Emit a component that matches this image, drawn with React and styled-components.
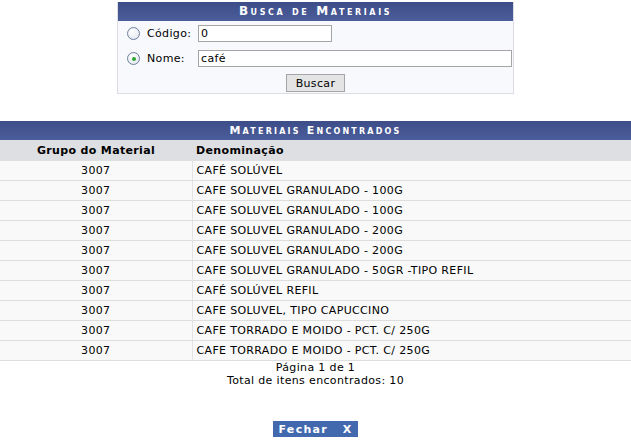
import React from "react";
import styled, { createGlobalStyle } from "styled-components";

const GlobalStyle = createGlobalStyle`
  body {
    margin: 0;
    background: #ffffff;
    font-family: "DejaVu Sans", Verdana, sans-serif;
    font-size: 11px;
    letter-spacing: 0.35px;
    color: #000;
  }
`;

const Page = styled.div`
  width: 631px;
  padding-top: 2px;
`;

const SearchBox = styled.form`
  width: 395px;
  margin: 0 auto;
  border: 1px solid #dcdde2;
  border-top: none;
  background: #f8f9fc;
`;

const Caption = styled.div`
  height: 19px;
  line-height: 19px;
  background: linear-gradient(#3d4d88, #4b5d9b);
  color: #fff;
  font-weight: bold;
  font-variant: small-caps;
  letter-spacing: 2.6px;
  text-align: center;
  font-size: 12px;
`;

const FieldRow = styled.div`
  display: flex;
  align-items: center;
  height: 25px;
  padding-left: 9px;
`;

const Radio = styled.span`
  width: 11px;
  height: 11px;
  border-radius: 50%;
  border: 1px solid #6f7f9e;
  background: radial-gradient(circle at 40% 35%, #ffffff, #dde2ea);
  display: flex;
  align-items: center;
  justify-content: center;
  margin-right: 7px;

  &::after {
    content: "";
    width: 4px;
    height: 4px;
    border-radius: 50%;
    background: ${(p) => (p.checked ? "#2ea52e" : "transparent")};
  }
`;

const Label = styled.span`
  width: 51px;
`;

const TextInput = styled.input`
  box-sizing: border-box;
  width: ${(p) => p.w}px;
  height: 17px;
  border: 1px solid #a5a5a5;
  padding: 0 2px;
  font-family: inherit;
  font-size: 11px;
  letter-spacing: 0.35px;
  background: #fff;
`;

const ButtonRow = styled.div`
  display: flex;
  justify-content: center;
  padding: 3px 0 1px 0;
`;

const Button = styled.button`
  width: 59px;
  height: 18px;
  border: 1px solid #a5a5a5;
  background: #e4e4e4;
  font-family: inherit;
  font-size: 11px;
  letter-spacing: 0.35px;
  padding: 0;
`;

const Results = styled.table`
  margin-top: 27px;
  width: 100%;
  border-collapse: collapse;
`;

const TableCaption = styled.th`
  height: 19px;
  padding: 0;
  background: linear-gradient(#3d4d88, #4b5d9b);
  color: #fff;
  font-weight: bold;
  font-variant: small-caps;
  letter-spacing: 2.2px;
  font-size: 11px;
`;

const HeadCell = styled.th`
  height: 21px;
  padding: 0 0 0 ${(p) => (p.left ? "4px" : "0")};
  background: #dedfe3;
  text-align: ${(p) => (p.left ? "left" : "center")};
  font-weight: bold;
  width: ${(p) => (p.w ? p.w + "px" : "auto")};
`;

const Cell = styled.td`
  height: 19px;
  padding: 0 0 0 ${(p) => (p.left ? "4px" : "0")};
  background: #f9f9f9;
  border-bottom: 1px solid #dedede;
  border-left: ${(p) => (p.left ? "1px solid #e3e3e3" : "none")};
  text-align: ${(p) => (p.left ? "left" : "center")};
`;

const Footer = styled.div`
  text-align: center;
  line-height: 13px;
`;

const CloseRow = styled.div`
  display: flex;
  justify-content: center;
  margin-top: 34px;
  padding-right: 1px;
`;

const CloseButton = styled.button`
  width: 85px;
  height: 16px;
  background: #4268ae;
  color: #fff;
  border: none;
  font-family: inherit;
  font-size: 11px;
  font-weight: bold;
  letter-spacing: 1.3px;
  display: flex;
  justify-content: space-between;
  align-items: center;
  padding: 0 5px 0 6px;
`;

const rows = [
  "CAFÉ SOLÚVEL",
  "CAFE SOLUVEL GRANULADO - 100G",
  "CAFE SOLUVEL GRANULADO - 100G",
  "CAFE SOLUVEL GRANULADO - 200G",
  "CAFE SOLUVEL GRANULADO - 200G",
  "CAFE SOLUVEL GRANULADO - 50GR -TIPO REFIL",
  "CAFÉ SOLÚVEL REFIL",
  "CAFE SOLUVEL, TIPO CAPUCCINO",
  "CAFE TORRADO E MOIDO - PCT. C/ 250G",
  "CAFE TORRADO E MOIDO - PCT. C/ 250G",
];

function App() {
  return (
    <Page>
      <GlobalStyle />
      <SearchBox onSubmit={(e) => e.preventDefault()}>
        <Caption>Busca de Materiais</Caption>
        <FieldRow>
          <Radio />
          <Label>Código:</Label>
          <TextInput w={134} defaultValue="0" />
        </FieldRow>
        <FieldRow>
          <Radio checked />
          <Label>Nome:</Label>
          <TextInput w={314} defaultValue="café" />
        </FieldRow>
        <ButtonRow>
          <Button>Buscar</Button>
        </ButtonRow>
      </SearchBox>

      <Results>
        <thead>
          <tr>
            <TableCaption colSpan={2}>Materiais Encontrados</TableCaption>
          </tr>
          <tr>
            <HeadCell w={192}>Grupo do Material</HeadCell>
            <HeadCell left>Denominação</HeadCell>
          </tr>
        </thead>
        <tbody>
          {rows.map((r, i) => (
            <tr key={i}>
              <Cell>3007</Cell>
              <Cell left>{r}</Cell>
            </tr>
          ))}
        </tbody>
      </Results>
      <Footer>
        Página 1 de 1
        <br />
        Total de itens encontrados: 10
      </Footer>
      <CloseRow>
        <CloseButton>
          <span>Fechar</span>
          <span>X</span>
        </CloseButton>
      </CloseRow>
    </Page>
  );
}

export default App;
